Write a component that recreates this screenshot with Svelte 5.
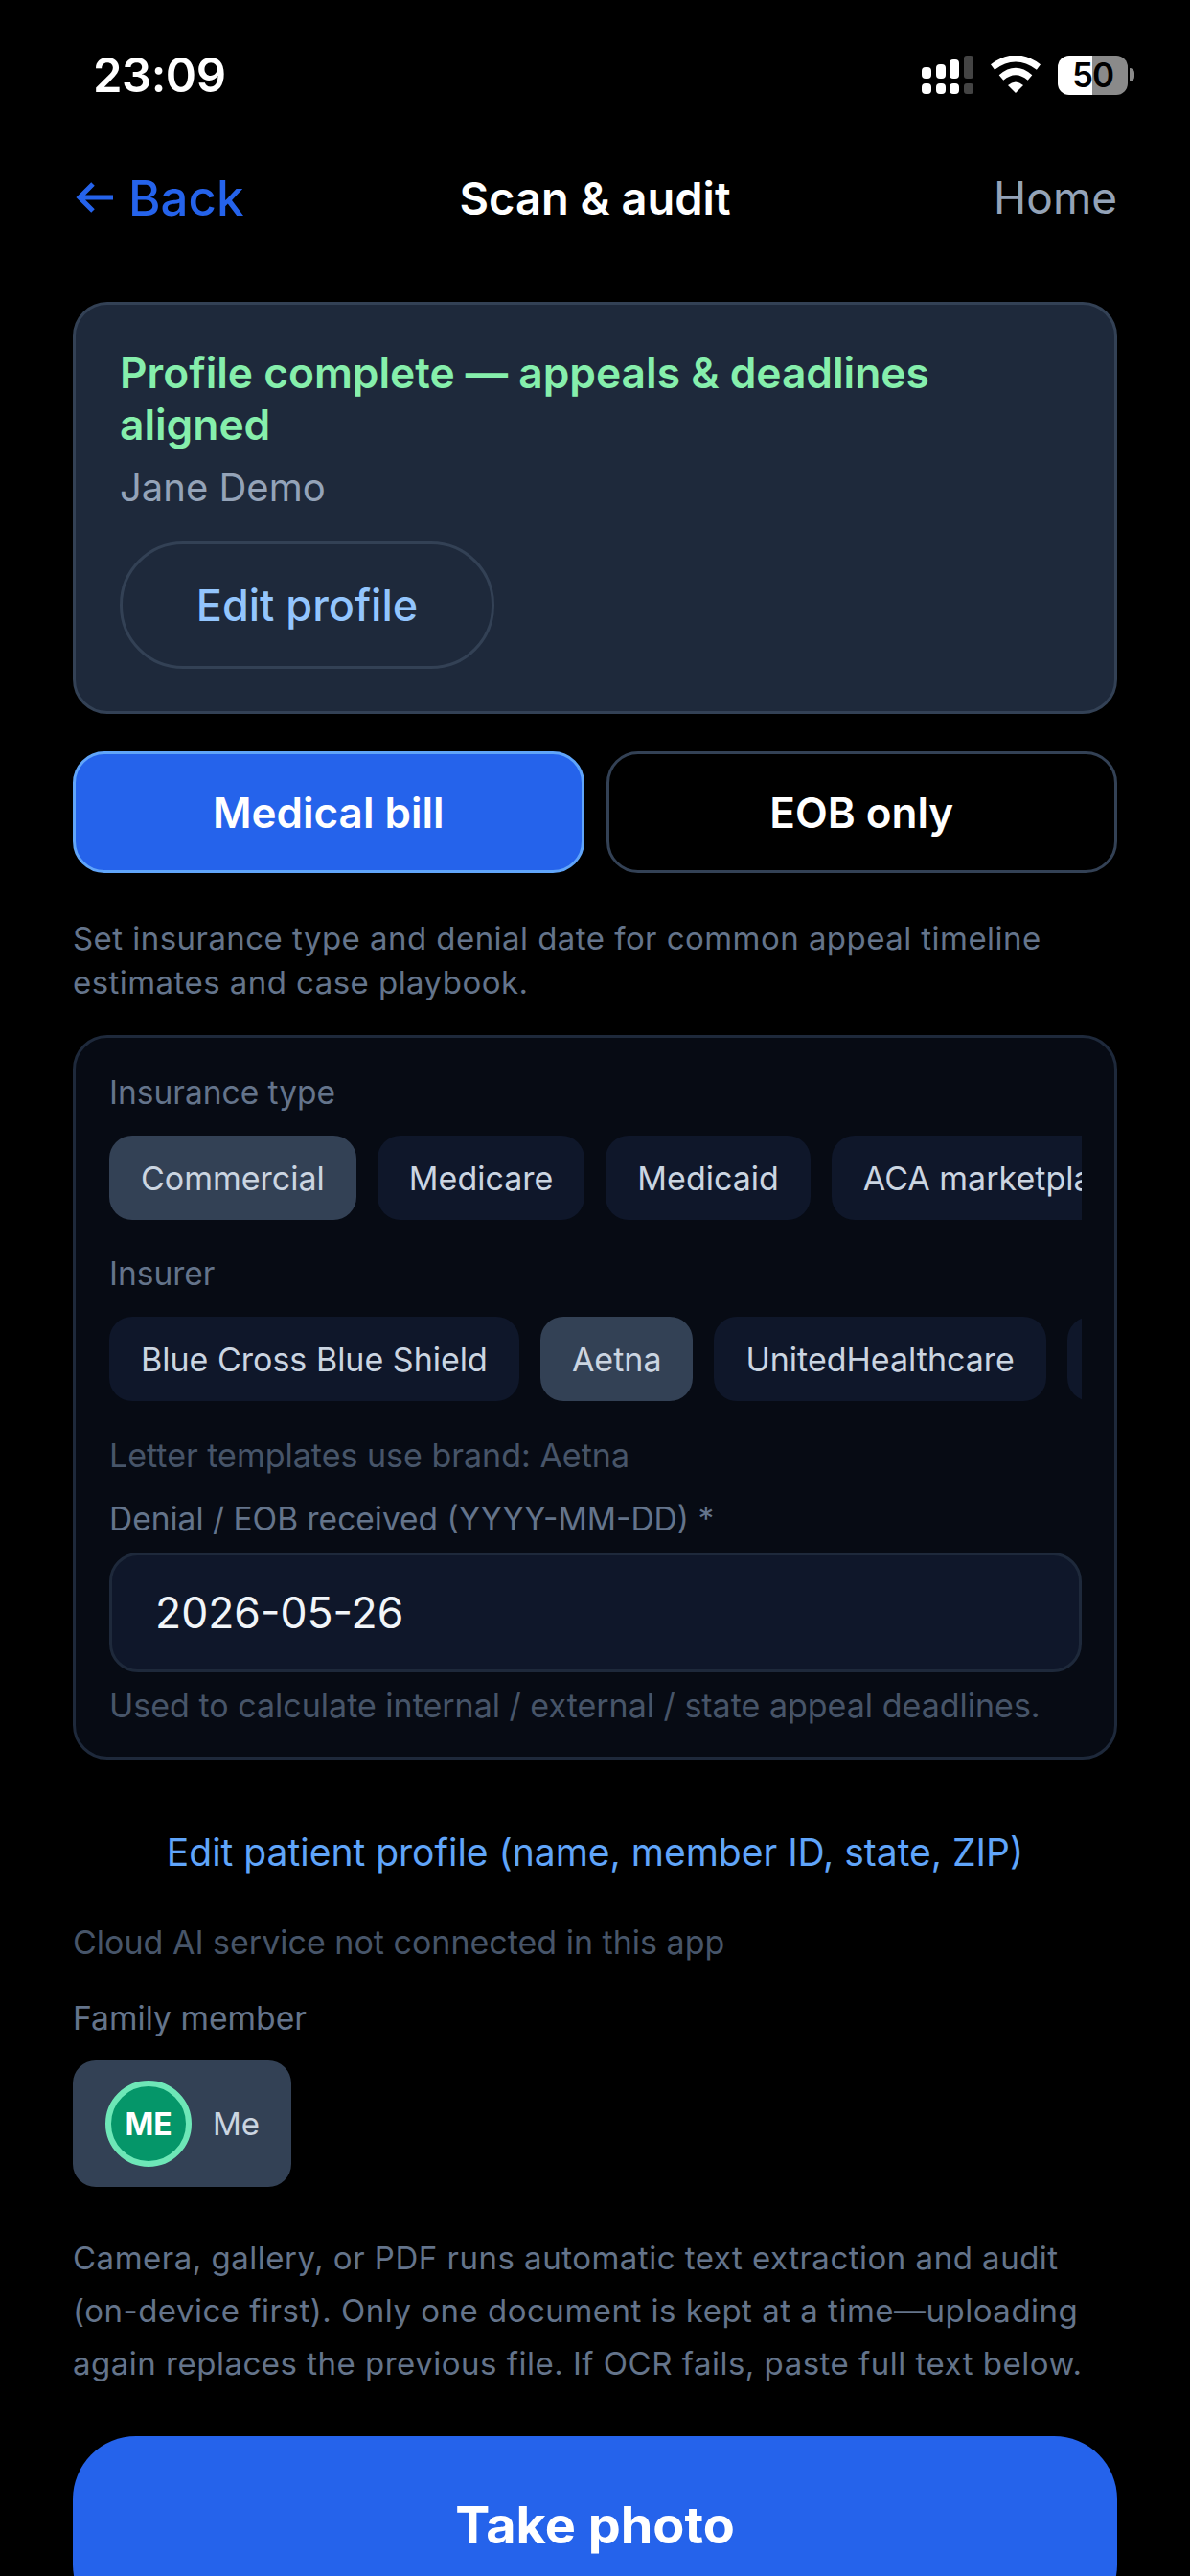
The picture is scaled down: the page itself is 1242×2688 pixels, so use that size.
<script>
  const insuranceTypes = [
    { label: 'Commercial', active: true },
    { label: 'Medicare' },
    { label: 'Medicaid' },
    { label: 'ACA marketplace' }
  ];
  const insurers = [
    { label: 'Blue Cross Blue Shield' },
    { label: 'Aetna', active: true },
    { label: 'UnitedHealthcare' },
    { label: 'Cigna' }
  ];
</script>

<div class="page">
  <div class="status">
    <span class="time">23:09</span>
    <div class="status-icons">
      <svg class="signal" width="54" height="40" viewBox="0 0 54 40">
        <rect x="0" y="12" width="10" height="12" rx="4" fill="#fff" />
        <rect x="15" y="9" width="10" height="15" rx="4" fill="#fff" />
        <rect x="29" y="4" width="10" height="20" rx="4" fill="#fff" />
        <rect x="44" y="0" width="10" height="24" rx="3" fill="#444" />
        <rect x="0" y="29" width="10" height="11" rx="4" fill="#fff" />
        <rect x="15" y="29" width="10" height="11" rx="4" fill="#fff" />
        <rect x="29" y="29" width="10" height="11" rx="4" fill="#fff" />
        <rect x="44" y="29" width="10" height="11" rx="3" fill="#444" />
      </svg>
      <svg class="wifi" width="52" height="40" viewBox="0 0 52 40">
        <path d="M2 12 Q26 -6 50 12" fill="none" stroke="#fff" stroke-width="7" />
        <path d="M11 23 Q26 10 41 23" fill="none" stroke="#fff" stroke-width="7" />
        <path d="M18 31 Q26 24 34 31 L26 39 Z" fill="#fff" />
      </svg>
      <div class="battery">
        <div class="battery-body"><span>50</span></div>
        <div class="battery-tip"></div>
      </div>
    </div>
  </div>

  <header class="nav">
    <div class="back">
      <svg width="42" height="36" viewBox="0 0 42 36">
        <path d="M39 18 H5 M18 4 L4 18 L18 32" fill="none" stroke="#2563eb" stroke-width="5" />
      </svg>
      <span>Back</span>
    </div>
    <div class="nav-title">Scan &amp; audit</div>
    <div class="home">Home</div>
  </header>

  <section class="profile-card">
    <div class="profile-title">Profile complete — appeals &amp; deadlines aligned</div>
    <div class="profile-name">Jane Demo</div>
    <div class="edit-btn">Edit profile</div>
  </section>

  <div class="mode-row">
    <div class="mode active">Medical bill</div>
    <div class="mode">EOB only</div>
  </div>

  <p class="hint">Set insurance type and denial date for common appeal timeline estimates and case playbook.</p>

  <section class="audit-box">
    <div class="label">Insurance type</div>
    <div class="chips">
      {#each insuranceTypes as chip}
        <div class="chip" class:active={chip.active}>{chip.label}</div>
      {/each}
    </div>
    <div class="label second">Insurer</div>
    <div class="chips">
      {#each insurers as chip}
        <div class="chip" class:active={chip.active}>{chip.label}</div>
      {/each}
    </div>
    <div class="small-note brand">Letter templates use brand: Aetna</div>
    <div class="label denial">Denial / EOB received (YYYY-MM-DD) *</div>
    <div class="date-input">2026-05-26</div>
    <div class="small-note used">Used to calculate internal / external / state appeal deadlines.</div>
  </section>

  <div class="patient-link">Edit patient profile (name, member ID, state, ZIP)</div>
  <div class="cloud">Cloud AI service not connected in this app</div>
  <div class="family-label">Family member</div>
  <div class="member">
    <div class="avatar">ME</div>
    <span>Me</span>
  </div>

  <p class="camera-note">Camera, gallery, or PDF runs automatic text extraction and audit (on-device first). Only one document is kept at a time—uploading again replaces the previous file. If OCR fails, paste full text below.</p>

  <div class="photo-btn">Take photo</div>
</div>

<style>
  :global(body) {
    margin: 0;
    background: #000;
  }

  .page {
    width: 1242px;
    height: 2688px;
    overflow: hidden;
    background: #000;
    box-sizing: border-box;
    padding: 0 76px;
    font-family: Inter, "Liberation Sans", sans-serif;
    color: #fff;
  }

  .status {
    height: 156px;
    margin: 0 -76px;
    padding: 0 58px 0 97px;
    box-sizing: border-box;
    display: flex;
    justify-content: space-between;
    align-items: center;
  }

  .time {
    font-size: 49px;
    font-weight: 600;
    letter-spacing: -0.5px;
  }

  .status-icons {
    display: flex;
    align-items: center;
    gap: 18px;
  }

  .battery {
    display: flex;
    align-items: center;
    gap: 2px;
  }

  .battery-body {
    width: 73px;
    height: 41px;
    border-radius: 12px;
    background: linear-gradient(90deg, #fff 50%, #8a8a8a 50%);
    display: flex;
    align-items: center;
    justify-content: center;
    color: #000;
    font-size: 35px;
    font-weight: 600;
    letter-spacing: -1px;
  }

  .battery-tip {
    width: 5px;
    height: 14px;
    border-radius: 0 6px 6px 0;
    background: #8a8a8a;
  }

  .nav {
    height: 100px;
    display: grid;
    grid-template-columns: 1fr auto 1fr;
    align-items: center;
  }

  .back {
    display: flex;
    align-items: center;
    gap: 13px;
    margin-left: 3px;
    color: #2563eb;
    font-size: 51px;
    font-weight: 500;
  }

  .nav-title {
    font-size: 47px;
    font-weight: 600;
  }

  .home {
    justify-self: end;
    font-size: 46px;
    color: #94a3b8;
  }

  .profile-card {
    margin-top: 59px;
    height: 430px;
    box-sizing: border-box;
    background: #1e293b;
    border: 3px solid #334155;
    border-radius: 36px;
    padding: 44px 46px;
  }

  .profile-title {
    font-size: 44.3px;
    font-weight: 600;
    line-height: 54px;
    color: #86efac;
  }

  .profile-name {
    margin-top: 12px;
    font-size: 40px;
    line-height: 54px;
    color: #94a3b8;
  }

  .edit-btn {
    margin-top: 29px;
    width: 391px;
    height: 133px;
    box-sizing: border-box;
    border: 3px solid #334155;
    border-radius: 66px;
    display: flex;
    align-items: center;
    justify-content: center;
    color: #93c5fd;
    font-size: 45px;
    font-weight: 500;
  }

  .mode-row {
    margin-top: 39px;
    display: grid;
    grid-template-columns: 1fr 1fr;
    gap: 23px;
  }

  .mode {
    height: 127px;
    box-sizing: border-box;
    border: 3px solid #334155;
    border-radius: 33px;
    display: flex;
    align-items: center;
    justify-content: center;
    font-size: 44px;
    font-weight: 600;
  }

  .mode.active {
    background: #2563eb;
    border-color: #60a5fa;
  }

  .hint {
    margin: 45px 0 0;
    font-size: 33px;
    line-height: 46px;
    letter-spacing: 0.45px;
    color: #64748b;
  }

  .audit-box {
    margin-top: 32px;
    height: 756px;
    box-sizing: border-box;
    background: #070b14;
    border: 3px solid #1e293b;
    border-radius: 36px;
    padding: 34px 34px 34px 35px;
  }

  .label {
    font-size: 33.5px;
    line-height: 46px;
    color: #64748b;
  }

  .label.second {
    margin-top: 33px;
  }

  .label.denial {
    margin-top: 20px;
  }

  .chips {
    margin-top: 22px;
    display: flex;
    gap: 22px;
    overflow: hidden;
  }

  .chip {
    flex: none;
    height: 88px;
    padding: 0 33px;
    border-radius: 24px;
    background: #0f172a;
    color: #cbd5e1;
    font-size: 34px;
    display: flex;
    align-items: center;
  }

  .chip.active {
    background: #334155;
  }

  .small-note {
    font-size: 34px;
    line-height: 46px;
    color: #475569;
  }

  .small-note.brand {
    margin-top: 34px;
  }

  .small-note.used {
    margin-top: 12px;
  }

  .date-input {
    margin-top: 12px;
    height: 125px;
    box-sizing: border-box;
    background: #0f172a;
    border: 3px solid #1e293b;
    border-radius: 30px;
    padding: 0 45px;
    display: flex;
    align-items: center;
    font-size: 44.5px;
    color: #f1f5f9;
  }

  .patient-link {
    margin-top: 72px;
    text-align: center;
    font-size: 39px;
    line-height: 50px;
    color: #60a5fa;
  }

  .cloud {
    margin-top: 46px;
    font-size: 34px;
    line-height: 46px;
    color: #475569;
  }

  .family-label {
    margin-top: 33px;
    font-size: 33.7px;
    line-height: 46px;
    color: #64748b;
  }

  .member {
    margin-top: 21px;
    width: 228px;
    height: 132px;
    box-sizing: border-box;
    padding-left: 34px;
    border-radius: 24px;
    background: #334155;
    display: flex;
    align-items: center;
    gap: 22px;
    font-size: 33px;
    color: #cbd5e1;
  }

  .avatar {
    width: 90px;
    height: 90px;
    box-sizing: border-box;
    border-radius: 50%;
    border: 6px solid #6ee7b7;
    background: #059669;
    color: #fff;
    font-size: 32px;
    font-weight: 700;
    display: flex;
    align-items: center;
    justify-content: center;
  }

  .camera-note {
    margin: 47px 0 0;
    font-size: 33px;
    line-height: 55px;
    letter-spacing: 0.5px;
    color: #64748b;
  }

  .photo-btn {
    margin-top: 48px;
    height: 200px;
    border-radius: 66px;
    background: #2563eb;
    display: flex;
    align-items: flex-start;
    justify-content: center;
    padding-top: 60px;
    box-sizing: border-box;
    font-size: 54px;
    font-weight: 700;
  }
</style>
